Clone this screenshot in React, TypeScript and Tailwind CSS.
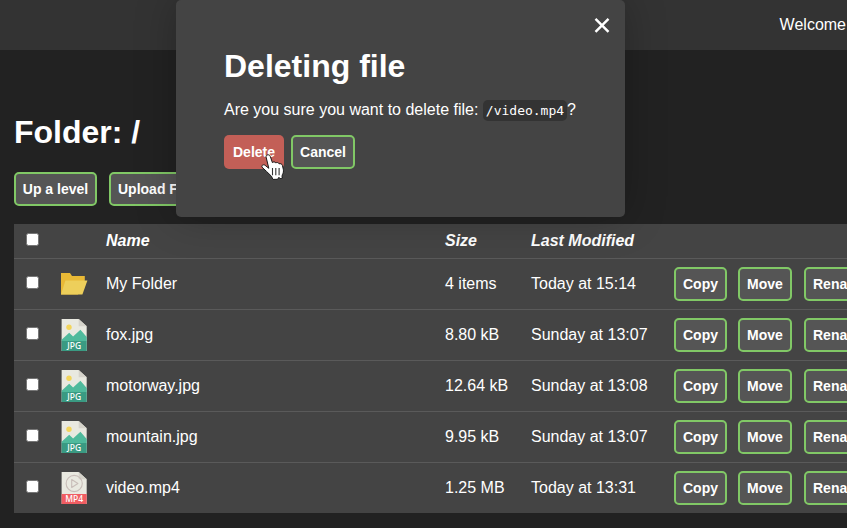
import React from "react";

type Kind = "folder" | "jpg" | "mp4";

const files: { name: string; size: string; modified: string; kind: Kind }[] = [
  { name: "My Folder", size: "4 items", modified: "Today at 15:14", kind: "folder" },
  { name: "fox.jpg", size: "8.80 kB", modified: "Sunday at 13:07", kind: "jpg" },
  { name: "motorway.jpg", size: "12.64 kB", modified: "Sunday at 13:08", kind: "jpg" },
  { name: "mountain.jpg", size: "9.95 kB", modified: "Sunday at 13:07", kind: "jpg" },
  { name: "video.mp4", size: "1.25 MB", modified: "Today at 13:31", kind: "mp4" },
];

function Button({ children, className = "" }: { children: React.ReactNode; className?: string }) {
  return (
    <button
      className={`flex h-[34px] shrink-0 items-center justify-center whitespace-nowrap rounded-[5px] border-2 border-[#81c866] bg-[#555] px-[7px] text-[14px] leading-none font-bold text-white ${className}`}
    >
      {children}
    </button>
  );
}

function FileIcon({ kind }: { kind: Kind }) {
  if (kind === "folder") {
    return (
      <svg width="32" height="32" viewBox="0 0 32 32" className="block">
        <path d="M3 5h9l2 3h12.8v4.5L20 26.5H3z" fill="#e9b936" />
        <path d="M7.4 12.6H29.4l-5 14H3z" fill="#edcf5b" />
      </svg>
    );
  }
  const jpg = kind === "jpg";
  return (
    <svg width="32" height="32" viewBox="0 0 32 32" className="block">
      <path d="M3.6 0h17.1l8 7.2V32H3.6z" fill="#e9e9e0" />
      <path d="M20.7 0v7.2h8z" fill="#d5d3ca" />
      {jpg ? (
        <>
          <circle cx="11" cy="8.2" r="2.7" fill="#f3d55b" />
          <path d="M3.6 22v-1.2l7.6-7.1 3.9 3.9 7.3-6.9 6.3 7.2V22z" fill="#4fba9c" />
          <path d="M3.6 22h25.1v10H3.6z" fill="#3a9a82" />
        </>
      ) : (
        <>
          <circle cx="16.2" cy="11.5" r="8.1" fill="none" stroke="#c8bdb8" strokeWidth="1.1" />
          <path d="M13.7 7.5v8l6.2-4z" fill="none" stroke="#c8bdb8" strokeWidth="1.1" strokeLinejoin="round" />
          <path d="M3.6 22h25.1v10H3.6z" fill="#f05d62" />
        </>
      )}
      <text
        x="16.2"
        y="30.2"
        textAnchor="middle"
        fill="#fff"
        className="font-['Noto_Sans',sans-serif] text-[8.5px] font-medium"
      >
        {jpg ? "JPG" : "MP4"}
      </text>
    </svg>
  );
}

function Checkbox() {
  return <span className="block size-[13px] rounded-[2.5px] border border-[#767676] bg-white" />;
}

const columns = "grid grid-cols-[44px_48px_339px_86px_143px_1fr] items-center";

export default function App() {
  return (
    <div className="relative h-[528px] w-[847px] overflow-hidden bg-[#222] font-['Liberation_Sans',Arial,sans-serif] text-base text-white">
      <header className="flex h-[50px] items-center justify-end bg-[#333] pr-px">
        <span>Welcome</span>
      </header>

      <main className="pl-[14px] pt-[64px]">
        <h1 className="text-[32px] leading-[36px] font-bold">Folder: /</h1>
        <div className="mt-[22px] flex gap-3">
          <Button className="w-[83px]">Up a level</Button>
          <Button>Upload File</Button>
        </div>

        <section className="mt-[18px] w-[960px] bg-[#444]">
          <div className={`${columns} h-[34px] font-bold italic`}>
            <div className="-mt-[3px] pl-3">
              <Checkbox />
            </div>
            <span />
            <span className="-mt-px">Name</span>
            <span className="-mt-px">Size</span>
            <span className="-mt-px">Last Modified</span>
            <span />
          </div>
          {files.map((file) => (
            <div key={file.name} className={`${columns} h-[51px] border-t border-[#5a5a5a]`}>
              <div className="-mt-[3px] pl-3">
                <Checkbox />
              </div>
              <FileIcon kind={file.kind} />
              <span className="-mt-px">{file.name}</span>
              <span className="-mt-px">{file.size}</span>
              <span className="-mt-px">{file.modified}</span>
              <div className="flex">
                <Button className="mr-[11px] w-[53px]">Copy</Button>
                <Button className="mr-3 w-[54px]">Move</Button>
                <Button>Rename</Button>
              </div>
            </div>
          ))}
        </section>
      </main>

      <div
        role="dialog"
        className="absolute left-[176px] top-0 h-[217px] w-[449px] rounded-[5px] bg-[#444] px-12 pt-12 shadow-[0_0_40px_rgba(0,0,0,0.25)]"
      >
        <svg viewBox="0 0 16 16" className="absolute left-[418px] top-[17px] size-4">
          <path d="M1.5 1.8l13 13M14.5 1.8l-13 13" stroke="#fff" strokeWidth="2.4" />
        </svg>
        <h2 className="text-[32px] leading-[36px] font-bold">Deleting file</h2>
        <p className="mt-[14px] h-6 whitespace-nowrap leading-6">
          Are you sure you want to delete file:{" "}
          <code className="rounded-[5px] bg-[#333] px-[3px] py-[3px] font-['DejaVu_Sans_Mono',monospace] text-[13px]">
            /video.mp4
          </code>
          ?
        </p>
        <div className="mt-[13px] flex gap-[7px]">
          <button className="h-[34px] w-[60px] rounded-[5px] bg-[#c35f57] text-[14px] leading-none font-bold">
            Delete
          </button>
          <Button className="w-[64px]">Cancel</Button>
        </div>
        <svg viewBox="0 0 24 26" className="absolute left-[85px] top-[154px] h-[26px] w-6">
          <path
            d="M6.2 1C7.7.4 8.9 1.1 9.4 2.7l2 5.9c.8-1.1 2.9-.9 3.4.4.9-.9 2.9-.6 3.3.8 1.3-.5 3 .2 3.3 1.6l.9 3.8c.4 2.3 0 3.9-.9 5.4l-.4 1.8.5 1.6-2.3.6-1.3-1.3-1.3 2-4.8.1-1.2-3-5.1-5L1 13.2c-.7-1.9 1.5-3.2 3.2-1.8L7.8 14.3 5.1 3.1C4.9 2 5.3 1.3 6.2 1z"
            fill="#fff"
            stroke="#171717"
            strokeWidth="1"
            strokeLinejoin="round"
          />
          <path d="M11.5 14v7.2M14.8 14v7.2M18.1 14v7.2" stroke="#333" strokeWidth="1.1" />
        </svg>
      </div>
    </div>
  );
}
